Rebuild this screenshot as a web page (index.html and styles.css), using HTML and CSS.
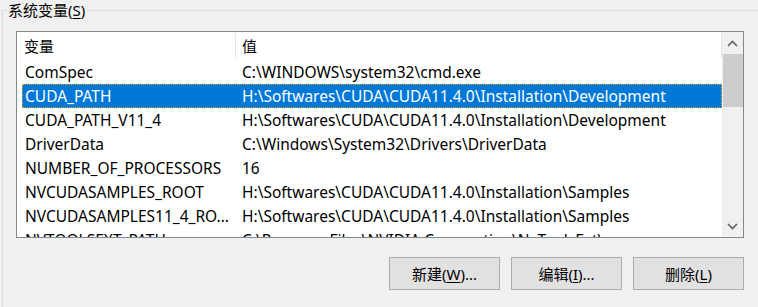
FILE: index.html
```html
<!DOCTYPE html>
<html lang="zh-CN">
<head>
<meta charset="utf-8">
<link rel="stylesheet" href="styles.css">
</head>
<body>
<fieldset class="group">
  <legend class="legend">系统变量(<u>S</u>)</legend>
  <div class="list">
    <div class="list-main">
      <div class="header">
        <div class="hcell c1">变量</div>
        <div class="hcell c2">值</div>
      </div>
      <div class="rows">
        <div class="row"><span class="c1">ComSpec</span><span class="c2">C:\WINDOWS\system32\cmd.exe</span></div>
        <div class="row selected"><span class="c1">CUDA_PATH</span><span class="c2">H:\Softwares\CUDA\CUDA11.4.0\Installation\Development</span></div>
        <div class="row"><span class="c1">CUDA_PATH_V11_4</span><span class="c2">H:\Softwares\CUDA\CUDA11.4.0\Installation\Development</span></div>
        <div class="row"><span class="c1">DriverData</span><span class="c2">C:\Windows\System32\Drivers\DriverData</span></div>
        <div class="row"><span class="c1">NUMBER_OF_PROCESSORS</span><span class="c2">16</span></div>
        <div class="row"><span class="c1">NVCUDASAMPLES_ROOT</span><span class="c2">H:\Softwares\CUDA\CUDA11.4.0\Installation\Samples</span></div>
        <div class="row"><span class="c1">NVCUDASAMPLES11_4_RO...</span><span class="c2">H:\Softwares\CUDA\CUDA11.4.0\Installation\Samples</span></div>
        <div class="row"><span class="c1">NVTOOLSEXT_PATH</span><span class="c2">C:\Program Files\NVIDIA Corporation\NvToolsExt\</span></div>
      </div>
    </div>
    <div class="scrollbar">
      <div class="sb-btn">
        <svg width="11" height="7" viewBox="0 0 11 7"><path d="M1 6 L5.5 1.5 L10 6" fill="none" stroke="#606060" stroke-width="1.6"/></svg>
      </div>
      <div class="sb-track"><div class="sb-thumb"></div></div>
      <div class="sb-btn">
        <svg width="11" height="7" viewBox="0 0 11 7"><path d="M1 1 L5.5 5.5 L10 1" fill="none" stroke="#606060" stroke-width="1.6"/></svg>
      </div>
    </div>
  </div>
  <div class="buttons">
    <button class="btn">新建(<u>W</u>)...</button>
    <button class="btn">编辑(<u>I</u>)...</button>
    <button class="btn">删除(<u>L</u>)</button>
  </div>
</fieldset>
</body>
</html>
```

FILE: styles.css
```css
html, body {
  margin: 0;
  padding: 0;
  background: #f0f0f0;
  width: 758px;
  height: 307px;
  overflow: hidden;
}
body {
  font-family: "Noto Sans", "Noto Sans CJK SC", sans-serif;
  font-size: 15px;
  color: #000;
}
.group {
  margin: 0 0 0 2px;
  padding: 0;
  border: 1px solid #dcdcdc;
  border-right: none;
  border-bottom: none;
  min-width: 0;
  height: 320px;
}
.legend {
  margin-left: 4px;
  padding: 0 1px;
  line-height: 20px;
  font-size: 15px;
}
.legend u, .btn u { text-underline-offset: 2px; }
.list {
  margin: 11px 0 0 13px;
  width: 726px;
  height: 205px;
  border: 1px solid #828790;
  background: #fff;
  display: flex;
  overflow: hidden;
}
.list-main {
  flex: 1;
  min-width: 0;
  overflow: hidden;
}
.header {
  display: flex;
  height: 28px;
  align-items: stretch;
}
.hcell {
  display: flex;
  align-items: center;
  padding-left: 7px;
  border-right: 1px solid #e5e5e5;
  margin: 1px 0 2px 0;
}
.hcell.c1 { width: 211px; }
.hcell.c2 { flex: 1; padding-left: 6px; }
.rows { padding-left: 5px; }
.row {
  display: flex;
  height: 24px;
  line-height: 25px;
  white-space: nowrap;
  font-size: 15.5px;
}
.row .c1 { width: 217px; padding-left: 3px; flex: none; }
.row .c2 { padding-left: 0; }
.row.selected {
  background: #0078d7;
  color: #fff;
  outline: 1px dotted #f0a030;
  outline-offset: -1px;
}
.scrollbar {
  width: 21px;
  flex: none;
  background: #f0f0f0;
  display: flex;
  flex-direction: column;
}
.sb-btn {
  height: 22px;
  display: flex;
  align-items: center;
  justify-content: center;
  flex: none;
}
.sb-track { flex: 1; }
.sb-thumb {
  height: 53px;
  background: #cdcdcd;
  margin: 0 0 0 1px;
}
.buttons {
  display: flex;
  justify-content: flex-end;
  gap: 11px;
  margin: 19px 0 0 0;
  padding-right: 14px;
}
.btn {
  width: 111px;
  height: 33px;
  background: #e1e1e1;
  border: 1px solid #adadad;
  font-family: "Noto Sans", "Noto Sans CJK SC", sans-serif;
  font-size: 15px;
  color: #000;
  padding: 0;
}
```
